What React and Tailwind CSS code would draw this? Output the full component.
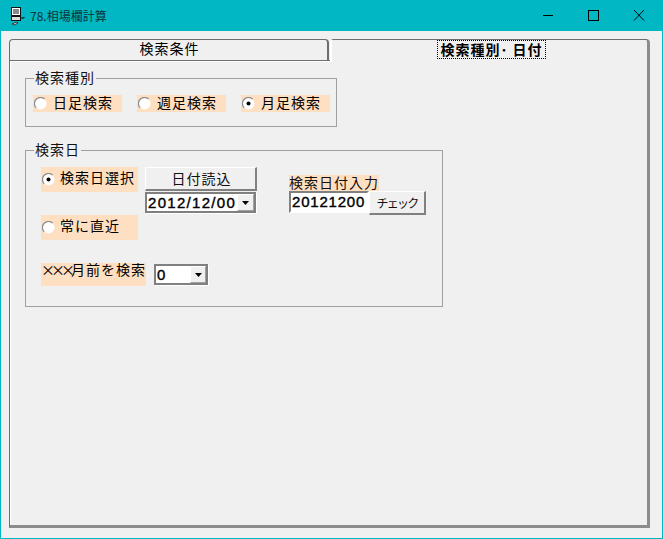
const font = { fontFamily: '"Noto Sans CJK JP", sans-serif' };
const latin = { fontFamily: '"Liberation Sans", sans-serif' };

function Radio({ on }) {
  return (
    <svg width="13" height="13" viewBox="0 0 13 13" className="shrink-0">
      <circle cx="6.5" cy="6.5" r="6" fill="#fff" />
      <path d="M2.2 10.8A6 6 0 0 1 10.8 2.2" fill="none" stroke="#8a8a8a" strokeWidth="1.2" />
      {on && <circle cx="6.5" cy="6.5" r="2" fill="#000" />}
    </svg>
  );
}

function Arrow() {
  return (
    <svg width="7" height="4" viewBox="0 0 7 4"><path d="M0 0h7L3.5 4z" fill="#000" /></svg>
  );
}

function Combo({ value, w, btn }) {
  return (
    <div className={`${w} h-[21px] bg-white border-2 border-[#808080] flex items-stretch shadow-[1px_1px_0_#fff]`}>
      <span className="flex-1 pl-[1px] text-[15px] leading-[17px] tracking-[1.3px] [-webkit-text-stroke:0.4px_#000] text-black" style={latin}>{value}</span>
      <span className={`${btn} flex items-center justify-center bg-[#f0f0f0] border border-t-white border-l-white border-r-[#a0a0a0] border-b-[#a0a0a0]`}><Arrow /></span>
    </div>
  );
}

function Legend({ children }) {
  return (
    <span className="absolute left-[8px] -top-[10px] bg-[#f0f0f0] px-[1px] text-[14px] leading-[16px] tracking-[1px] text-[#111]">{children}</span>
  );
}

function Band({ children, on, w = 'w-[89px]', h = 'h-[17px]', text = 'ml-[6px] -mt-[2px]' }) {
  return (
    <div className={`${w} ${h} bg-[#ffdfc1] flex items-center pl-[1px] text-[14px] tracking-[1px] text-black`}>
      <Radio on={on} />
      <span className={`${text} whitespace-nowrap`}>{children}</span>
    </div>
  );
}

export default function App() {
  return (
    <div className="w-[663px] h-[539px] border border-[#00b7c3] border-t-0 bg-[#f0f0f0] flex flex-col overflow-hidden" style={font}>
      <div className="h-[31px] -mx-[1px] bg-[#00b7c3] flex items-center shrink-0">
        <svg width="16" height="20" viewBox="0 0 16 20" className="ml-[10px] mr-[4px]">
          <rect x="1.5" y="1.5" width="9" height="8" fill="#fff" stroke="#111" />
          <rect x="3" y="3" width="6" height="5" fill="#8a8a8a" />
          <rect x="1.5" y="10.5" width="9" height="4" fill="#ddd" stroke="#111" />
          <path d="M11 12h3v-1" fill="none" stroke="#111" />
          <path d="M2 18l5-2 1 1-4 2z" fill="#fff" stroke="#111" strokeWidth="0.8" />
        </svg>
        <span className="text-[12px] leading-[15px] text-[#0c3438] -mt-[1px]">78.相場欄計算</span>
        <div className="ml-auto mr-[1px] flex items-center">
          <svg width="46" height="31" viewBox="0 0 46 31"><path d="M19 15.5h10" stroke="#000" /></svg>
          <svg width="46" height="31" viewBox="0 0 46 31"><rect x="18.5" y="10.5" width="10" height="10" fill="none" stroke="#000" /></svg>
          <svg width="46" height="31" viewBox="0 0 46 31"><path d="M18 10l10 10.5M28 10L18 20.5" stroke="#000" fill="none" /></svg>
        </div>
      </div>

      <div className="flex-1 pt-[8px] pl-[8px] pr-[12px] pb-[10px] flex flex-col">
        <div className="flex h-[21px] shrink-0 items-start">
          <div className="w-[320px] h-[21px] bg-[#f0f0f0] border border-b-0 border-[#6d6d6d] rounded-t-[4px] border-r-2 pl-[2px] text-center text-[14px] leading-[17px] tracking-[1px] text-black">検索条件</div>
          <div className="ml-[1px] w-[320px] h-[23px] bg-[#f0f0f0] border-t border-l-2 border-r-[3px] border-t-[#6d6d6d] border-l-white border-r-[#8c8c8c] rounded-t-[4px] text-[14px] leading-[19px] tracking-[1px] font-bold text-black flex justify-center relative z-10">
            <span className="h-[19px] ml-[4px] outline outline-1 outline-dotted outline-black -outline-offset-1 px-[3px]">検索種別･ 日付</span>
          </div>
        </div>

        <div className="flex-1 bg-[#f0f0f0] border border-[#6d6d6d] border-r-[3px] border-r-[#8c8c8c] border-b-[3px] border-b-[#8c8c8c] shadow-[inset_1px_1px_0_#fff] pt-[17px] pl-[15px]">
          <div className="relative w-[312px] h-[49px] border border-[#a0a0a0] flex items-start gap-[15px] pt-[16px] pl-[7px]">
            <Legend>検索種別</Legend>
            <Band>日足検索</Band>
            <Band>週足検索</Band>
            <Band on>月足検索</Band>
          </div>

          <div className="relative mt-[23px] w-[418px] h-[157px] border border-[#a0a0a0] pt-[16px] pl-[15px] flex">
            <Legend>検索日</Legend>
            <div className="w-[104px] flex flex-col shrink-0">
              <Band on w="w-[97px]" h="h-[25px]" text="ml-[5px] -mt-[4px]">検索日選択</Band>
              <div className="mt-[23px]"><Band w="w-[97px]" h="h-[25px]" text="ml-[5px] -mt-[4px]">常に直近</Band></div>
              <div className="mt-[23px] flex items-start gap-[8px] w-[170px]">
                <div className="w-[105px] h-[23px] shrink-0 bg-[#ffdfc1] text-[14px] leading-[13px] tracking-[1px] text-black whitespace-nowrap"><span className="tracking-[-4px]">×××</span>月前を検索</div>
                <div className="mt-[1px]"><Combo value="0" w="w-[54px]" btn="w-[16px]" /></div>
              </div>
            </div>
            <div className="w-[112px] shrink-0">
              <div className="h-[24px] mb-[1px] pl-[2px] bg-[#f0f0f0] border border-t-white border-l-white border-r-2 border-b-2 border-r-[#808080] border-b-[#808080] text-center text-[14px] leading-[21px] tracking-[1px] text-[#111]">日付読込</div>
              <Combo value="2012/12/00" w="w-[111px]" btn="w-[17px]" />
            </div>
            <div className="ml-[32px] mt-[8px] w-[137px] shrink-0">
              <div className="w-[90px] h-[16px] bg-[#ffdfc1] text-[14px] leading-[14px] tracking-[1px] text-[#111] whitespace-nowrap">検索日付入力</div>
              <div className="flex items-start">
                <div className="w-[80px] h-[22px] bg-white border-2 border-[#808080] border-r-white border-b-white text-[15px] leading-[18px] tracking-[0.8px] [-webkit-text-stroke:0.4px_#000] text-black pl-[1px]" style={latin}>20121200</div>
                <div className="w-[57px] h-[24px] bg-[#f0f0f0] border border-t-white border-l-white border-r-2 border-b-2 border-r-[#808080] border-b-[#808080] text-center text-[12px] leading-[21px] tracking-[-1.7px] text-[#111]">チェック</div>
              </div>
            </div>
          </div>
        </div>
      </div>
    </div>
  );
}
